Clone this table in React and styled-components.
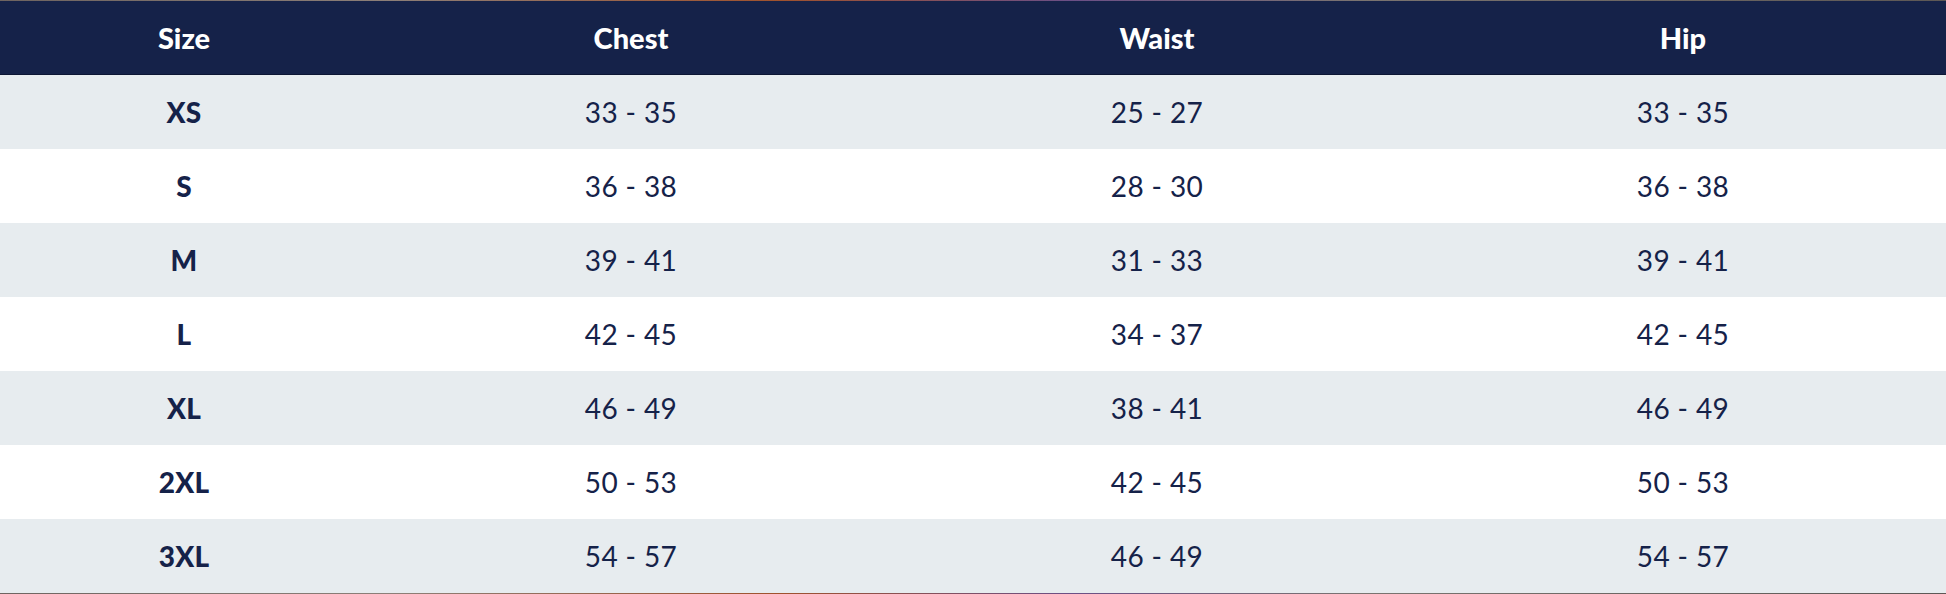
import React from "react";
import styled, { createGlobalStyle } from "styled-components";

const GlobalStyle = createGlobalStyle`
  html, body {
    margin: 0;
    padding: 0;
    background: #ffffff;
  }
  body {
    font-family: Lato, "Open Sans", sans-serif;
  }
`;

const rows = [
  ["XS", "33 - 35", "25 - 27", "33 - 35"],
  ["S", "36 - 38", "28 - 30", "36 - 38"],
  ["M", "39 - 41", "31 - 33", "39 - 41"],
  ["L", "42 - 45", "34 - 37", "42 - 45"],
  ["XL", "46 - 49", "38 - 41", "46 - 49"],
  ["2XL", "50 - 53", "42 - 45", "50 - 53"],
  ["3XL", "54 - 57", "46 - 49", "54 - 57"],
];

const Page = styled.div`
  width: 1946px;
  height: 594px;
  display: flex;
  flex-direction: column;
  overflow: hidden;
`;

const PhotoEdge = styled.div`
  height: 1px;
  flex: none;
  background: linear-gradient(
    90deg,
    #6e6460 0%,
    #8c7f78 20%,
    #a0522d 40%,
    #6b4f86 55%,
    #7a7470 70%,
    #5d5855 100%
  );
`;

const Table = styled.div`
  display: grid;
  grid-template-columns: 368px repeat(3, 1fr);
`;

const HeadRow = styled.div`
  display: contents;
`;

const HeadCell = styled.div`
  height: 73px;
  border-bottom: 1px solid #0c1634;
  background: #152249;
  color: #ffffff;
  font-weight: 900;
  font-size: 29px;
  display: flex;
  align-items: center;
  justify-content: center;
`;

const Cell = styled.div`
  height: 74px;
  display: flex;
  align-items: center;
  justify-content: center;
  background: ${(p) => (p.$shade ? "#e7ecef" : "#ffffff")};
  color: #152249;
  font-size: 28px;
  font-weight: ${(p) => (p.$label ? 900 : 400)};
  letter-spacing: ${(p) => (p.$label ? "0.2px" : "0.4px")};
`;

export default function App() {
  return (
    <>
      <GlobalStyle />
      <Page>
        <PhotoEdge />
        <Table>
          <HeadRow>
            <HeadCell>Size</HeadCell>
            <HeadCell>Chest</HeadCell>
            <HeadCell>Waist</HeadCell>
            <HeadCell>Hip</HeadCell>
          </HeadRow>
          {rows.map((r, i) =>
            r.map((v, j) => (
              <Cell key={i + "-" + j} $shade={i % 2 === 0} $label={j === 0}>
                {v}
              </Cell>
            ))
          )}
        </Table>
        <PhotoEdge />
      </Page>
    </>
  );
}
